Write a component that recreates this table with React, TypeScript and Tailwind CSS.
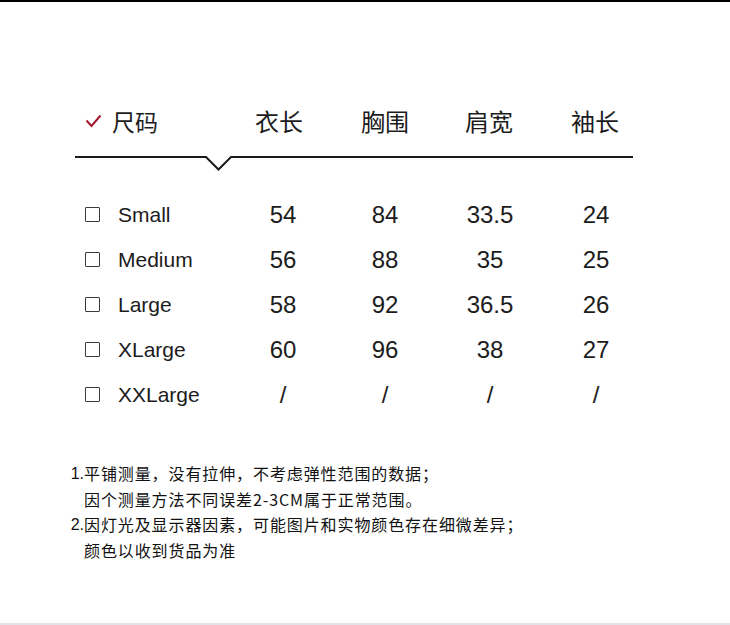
const SANS = "'Liberation Sans', Arial, 'Noto Sans CJK SC', sans-serif";
const CJK = "'Noto Sans CJK SC', 'Noto Sans', sans-serif";

const cols = ["衣长", "胸围", "肩宽", "袖长"];

const rows = [
  { size: "Small", v: ["54", "84", "33.5", "24"] },
  { size: "Medium", v: ["56", "88", "35", "25"] },
  { size: "Large", v: ["58", "92", "36.5", "26"] },
  { size: "XLarge", v: ["60", "96", "38", "27"] },
  { size: "XXLarge", v: ["/", "/", "/", "/"] },
];

const notes = [
  { n: "1.", text: "平铺测量，没有拉伸，不考虑弹性范围的数据；" },
  { n: "", text: "因个测量方法不同误差2-3CM属于正常范围。" },
  { n: "2.", text: "因灯光及显示器因素，可能图片和实物颜色存在细微差异；" },
  { n: "", text: "颜色以收到货品为准" },
];

const grid = "grid grid-cols-[147px_102px_102px_108px_104px] pl-[85px]";

export default function App() {
  return (
    <div className="w-[730px] h-[625px] bg-white border-t-2 border-black border-b-2 border-b-[#e2e2e8] flex flex-col overflow-hidden">
      {/* header */}
      <div className="grid grid-cols-[143px_102px_110px_98px_114px] pl-[85px] mt-[104px] h-[30px] items-center text-[#1c1c1c]">
        <div className="flex items-center">
          <svg width="17" height="14" viewBox="0 0 17 14" className="mt-[-1px]">
            <path d="M1.5 6.5 L6.5 12 L15.5 1.5" fill="none" stroke="#a3182b" strokeWidth="2" />
          </svg>
          <span className="ml-[10px] text-[23px] leading-none" style={{ fontFamily: CJK }}>尺码</span>
        </div>
        {cols.map((c) => (
          <div key={c} className="text-center text-[24px] leading-none" style={{ fontFamily: CJK }}>
            {c}
          </div>
        ))}
      </div>

      {/* divider with notch */}
      <svg width="558" height="16" viewBox="0 0 558 16" className="ml-[75px] mt-[20px] block">
        <path d="M0 1 H131 L143.5 13.5 L156 1 H558" fill="none" stroke="#1a1a1a" strokeWidth="2" />
      </svg>

      {/* rows */}
      <div className="mt-[20px] flex flex-col">
        {rows.map((r) => (
          <div key={r.size} className={`${grid} h-[45px] items-center text-[#1c1c1c]`}>
            <div className="flex items-center">
              <span className="w-[15px] h-[15px] border-[1.5px] border-[#3a3a3a] rounded-[1px]" />
              <span className="ml-[18px] text-[21px] leading-none" style={{ fontFamily: SANS }}>
                {r.size}
              </span>
            </div>
            {r.v.map((v, i) => (
              <div key={i} className="text-center text-[24px] leading-none" style={{ fontFamily: SANS }}>
                {v}
              </div>
            ))}
          </div>
        ))}
      </div>

      {/* notes */}
      <div className="mt-[44px] flex flex-col text-[16px] leading-[25.5px] text-[#111]" style={{ fontFamily: CJK }}>
        {notes.map((l, i) => (
          <div key={i} className="flex">
            <span className="w-[84px] text-right shrink-0" style={{ fontFamily: SANS }}>{l.n}</span>
            <span className="tracking-[0.9px]">{l.text}</span>
          </div>
        ))}
      </div>
    </div>
  );
}
